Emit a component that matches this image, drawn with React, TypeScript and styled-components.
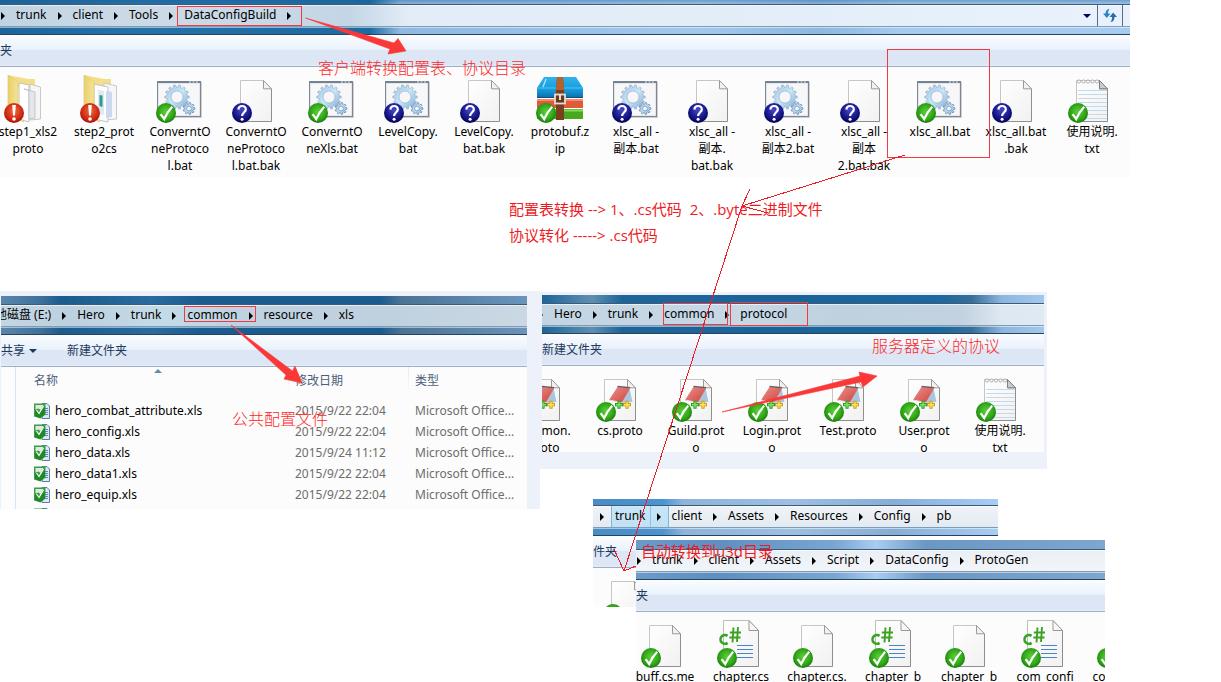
import React from "react";
import styled, { createGlobalStyle } from "styled-components";

const GlobalStyle = createGlobalStyle`
  * { box-sizing: border-box; }
  body {
    margin: 0;
    background: #fff;
    color: #000;
    font: 12px/17px "Noto Sans", "Noto Sans CJK SC", sans-serif;
  }
  button {
    margin: 0;
    padding: 0;
    border: 0;
    background: none;
    color: inherit;
    font: inherit;
    white-space: nowrap;
  }
`;

const Board = styled.main`
  position: relative;
  height: 100vh;
  min-height: 682px;
  overflow: hidden;
`;

/* Captured windows are pinned freely on the board. */
const Pin = styled.div<{ $x: number; $y: number; $w: number; $h?: number }>`
  position: absolute;
  left: ${(p) => p.$x}px;
  top: ${(p) => p.$y}px;
  width: ${(p) => p.$w}px;
  ${(p) => (p.$h ? `height: ${p.$h}px;` : "bottom: 0;")}
  overflow: hidden;
`;

const Backing = styled(Pin)`
  background: #edf2fa;
`;

const Window = styled.section`
  display: flex;
  flex-direction: column;
  height: 100%;
`;

const Glass = styled.header<{ $top: number; $glass: string }>`
  flex: none;
  display: flex;
  padding: ${(p) => p.$top}px 0 7px;
  border-bottom: 1px solid #27445f;
  background: ${(p) => p.$glass};
`;

const Address = styled.nav<{ $tint: string; $shift: number }>`
  flex: 1;
  display: flex;
  align-items: center;
  height: 23px;
  padding-left: ${(p) => Math.max(p.$shift, 0)}px;
  border-top: 1px solid #3c5b78;
  border-bottom: 1px solid #7e9cb6;
  box-shadow: inset 0 1px rgba(255, 255, 255, 0.6), 0 1px rgba(255, 255, 255, 0.5);
  background: ${(p) => p.$tint};
  overflow: hidden;

  & > :first-child {
    margin-left: ${(p) => Math.min(p.$shift, 0)}px;
  }
`;

const Crumb = styled.button<{ $hot?: boolean }>`
  height: 21px;
  padding: 0 4px 2px 3px;
  ${(p) => p.$hot && "background: rgba(150, 212, 248, 0.45); box-shadow: -1px 0 #7fb6dc, 1px 0 #7fb6dc;"}
`;

const Chevron = styled.span<{ $hot?: boolean }>`
  display: flex;
  align-items: center;
  justify-content: center;
  flex: none;
  width: 18px;
  height: 21px;
  margin-right: 1px;
  ${(p) => p.$hot && "background: rgba(150, 212, 248, 0.45); box-shadow: 1px 0 #7fb6dc;"}
`;

const AddressTools = styled.div`
  display: flex;
  align-items: center;
  margin-left: auto;
`;

const AddressButton = styled.button<{ $w: number; $line?: boolean }>`
  display: flex;
  align-items: center;
  justify-content: center;
  width: ${(p) => p.$w}px;
  height: 21px;
  ${(p) => p.$line && "border-left: 1px solid #4f6f8e; border-right: 1px solid #4f6f8e;"}
`;

const Toolbar = styled.div`
  flex: none;
  display: flex;
  align-items: center;
  height: 32px;
  border-bottom: 1px solid #a0afc8;
  background: linear-gradient(#fbfdff 0, #e8f1fb 15px, #dce6f4 15px, #dce6f4 29px, #e6eef9 31px);
  color: #1e395b;
`;

const ToolButton = styled.button<{ $gap?: number }>`
  display: flex;
  align-items: center;
  gap: 4px;
  margin-right: ${(p) => p.$gap ?? 0}px;
`;

const Files = styled.ul<{ $shift: number }>`
  flex: 1;
  display: flex;
  margin: 0;
  padding: 8px 0 0;
  list-style: none;
  background: #fcfcfc;

  & > :first-child {
    margin-left: ${(p) => p.$shift}px;
  }
`;

const File = styled.li`
  flex: none;
  display: flex;
  flex-direction: column;
  align-items: center;
  width: 76px;
  text-align: center;
  white-space: pre;
`;

const Details = styled.div`
  flex: 1;
  display: flex;
  background: #fcfcfc;
`;

const NavEdge = styled.div`
  flex: none;
  width: 15px;
  border-right: 1px solid #d6e5f5;
`;

const Table = styled.table`
  flex: 1;
  align-self: flex-start;
  border-collapse: collapse;
  table-layout: fixed;
`;

const Th = styled.th<{ $w?: number; $first?: boolean }>`
  position: relative;
  width: ${(p) => (p.$w ? `${p.$w}px` : "auto")};
  height: 33px;
  padding: 0 0 7px ${(p) => (p.$first ? 18 : 7)}px;
  color: #4c607a;
  font-weight: 400;
  text-align: left;
  background: ${(p) =>
    p.$first ? "none" : "linear-gradient(#dfeaf7, #fcfcfc) 0 0 / 1px 25px no-repeat"};
`;

const SortMark = styled.svg`
  position: absolute;
  left: 138px;
  top: 2px;
`;

const Td = styled.td`
  height: 21px;
  padding: 0 0 0 7px;
  color: #6d6d6d;
  white-space: nowrap;
`;

const NameCell = styled(Td)`
  padding-left: 18px;
  color: #000;
`;

const NameBox = styled.div`
  display: flex;
  align-items: center;
  gap: 5px;
`;

const Note = styled.p<{ $x: number; $y: number; $big?: boolean }>`
  position: absolute;
  left: ${(p) => p.$x}px;
  top: ${(p) => p.$y}px;
  margin: 0;
  color: ${(p) => (p.$big ? "#ff2626" : "#ed1c24")};
  font-family: "Open Sans", "Noto Sans CJK SC", sans-serif;
  font-size: ${(p) => (p.$big ? 16 : 15)}px;
  line-height: 26px;
  font-weight: ${(p) => (p.$big ? 300 : 400)};
  white-space: pre;
`;

const Marks = styled.svg`
  position: absolute;
  left: 0;
  top: 0;
  pointer-events: none;
`;

type BadgeKind = "ok" | "ask" | "warn";

const Defs = () => (
  <svg width="0" height="0" style={{ position: "absolute" }} aria-hidden="true">
    <defs>
      <radialGradient id="g-ok" cx=".5" cy=".45" r=".55">
        <stop offset="0" stopColor="#5fd03c" />
        <stop offset=".7" stopColor="#2fa516" />
        <stop offset="1" stopColor="#1a7a0c" />
      </radialGradient>
      <radialGradient id="g-ask" cx=".5" cy=".35" r=".6">
        <stop offset="0" stopColor="#4a4ac8" />
        <stop offset=".6" stopColor="#1c1c94" />
        <stop offset="1" stopColor="#06065a" />
      </radialGradient>
      <radialGradient id="g-warn" cx=".5" cy=".4" r=".6">
        <stop offset="0" stopColor="#f0683c" />
        <stop offset=".7" stopColor="#cf2a12" />
        <stop offset="1" stopColor="#a01208" />
      </radialGradient>
      <linearGradient id="g-page" x1="0" y1="0" x2="1" y2="1">
        <stop offset="0" stopColor="#fff" />
        <stop offset="1" stopColor="#f1f1f1" />
      </linearGradient>
      <linearGradient id="g-gear" x1="0" y1="0" x2="1" y2="1">
        <stop offset="0" stopColor="#a5c4e0" />
        <stop offset=".5" stopColor="#c6e6f8" />
        <stop offset="1" stopColor="#7fa9d2" />
      </linearGradient>
      <linearGradient id="g-fold" x1="0" y1="0" x2="1" y2="0">
        <stop offset="0" stopColor="#e9cf6c" />
        <stop offset="1" stopColor="#fbf0b4" />
      </linearGradient>
      <linearGradient id="g-book" x1="0" y1="0" x2="1" y2="1">
        <stop offset="0" stopColor="#ee8f88" />
        <stop offset="1" stopColor="#cc4440" />
      </linearGradient>
      <linearGradient id="g-blue" x1="0" y1="0" x2="0" y2="1">
        <stop offset="0" stopColor="#2eb4ee" />
        <stop offset=".6" stopColor="#179bdc" />
        <stop offset="1" stopColor="#0a6ea8" />
      </linearGradient>
    </defs>
  </svg>
);

const Badge = ({ kind }: { kind: BadgeKind }) => (
  <g>
    <circle cx="10" cy="38" r="10" fill={`url(#g-${kind})`} />
    {kind === "ok" && (
      <path d="M4.6 39.2 L8.2 44 C10.2 39.6 12.6 35.6 16.2 31.8" fill="none" stroke="#fff" strokeWidth="2.2" />
    )}
    {kind === "ask" && (
      <>
        <path d="M6.4 34.6 C6.6 29.6 14.2 30 13.8 34.6 C13.6 37.2 10.2 37.4 10.1 41" fill="none" stroke="#fff" strokeWidth="2.2" />
        <circle cx="10.1" cy="44.2" r="1.5" fill="#fff" />
      </>
    )}
    {kind === "warn" && (
      <>
        <path d="M8.2 30 H11.8 L11 40.6 H9 Z" fill="#fff" />
        <circle cx="10" cy="44" r="1.8" fill="#fff" />
      </>
    )}
  </g>
);

const Sheet = ({ tall }: { tall?: boolean }) =>
  tall ? (
    <g>
      <path d="M6.5 .5 H32 L41.5 10.5 V46.5 H6.5 Z" fill="url(#g-page)" stroke="#bdbdbd" />
      <path d="M41.5 10.5 V46.5 H7" fill="none" stroke="#8d8d8d" />
      <path d="M32 .5 V10.5 H41.5 Z" fill="#f6f6f6" stroke="#9a9a9a" />
    </g>
  ) : (
    <g>
      <path d="M8.5 5.5 H31.5 L39.5 14 V46.5 H8.5 Z" fill="url(#g-page)" stroke="#c6c6c6" />
      <path d="M39.5 14 V46.5 H9" fill="none" stroke="#8f8f8f" />
      <path d="M31.5 5.5 V13.8 H39.5 Z" fill="#f2f2f2" stroke="#9a9a9a" />
    </g>
  );

const gearPath = (cx: number, cy: number, r: number, n: number, tooth: number) => {
  const pts: string[] = [];
  for (let i = 0; i < n; i++) {
    const a = (i / n) * Math.PI * 2;
    const s = (Math.PI * 2) / n;
    [
      [a - s * 0.3, r],
      [a - s * 0.18, r + tooth],
      [a + s * 0.18, r + tooth],
      [a + s * 0.3, r],
    ].forEach(([t, q]) => pts.push(`${(cx + Math.cos(t) * q).toFixed(2)} ${(cy + Math.sin(t) * q).toFixed(2)}`));
  }
  return `M${pts.join("L")}Z`;
};

const hole = (cx: number, cy: number, r: number) =>
  `M${cx - r} ${cy}a${r} ${r} 0 1 0 ${2 * r} 0a${r} ${r} 0 1 0 ${-2 * r} 0Z`;

const Art: Record<string, React.ReactNode> = {
  page: <Sheet />,
  bat: (
    <g>
      <rect x="2.5" y="7.5" width="43" height="35" fill="none" stroke="#cfcfcf" />
      <rect x="1.5" y="6.5" width="43" height="35" fill="#f7f7f9" stroke="#7d8794" />
      <rect x="1" y="6" width="44" height="2" fill="#76828f" />
      <path d="M33 7h2M36.5 7h2M40 7h2" stroke="#d9e6f4" strokeWidth="1" />
      <rect x="2.5" y="8.5" width="41" height="32" fill="none" stroke="#e3e6ea" />
      <path
        fillRule="evenodd"
        d={gearPath(21, 22, 10, 14, 2.2) + hole(21, 22, 6)}
        fill="url(#g-gear)"
        stroke="#8fa9c4"
        strokeWidth=".6"
      />
      <path
        fillRule="evenodd"
        d={gearPath(33, 33.5, 4.4, 9, 1.6) + hole(33, 33.5, 2.4)}
        fill="url(#g-gear)"
        stroke="#5f88b2"
        strokeWidth=".7"
      />
    </g>
  ),
  txt: (
    <g>
      <Sheet />
      <path d="M10 15.5H39M10 19.5H39M10 23.5H39M10 27.5H39M10 31.5H39M10 35.5H39M10 39.5H39M10 43.5H39" stroke="#c3d9ec" />
      <path d="M31.5 5.5V13.8H39.5Z" fill="#c9ccd0" stroke="#7e7e7e" />
      {[11, 15.5, 20, 24.5, 29].map((x) => (
        <circle key={x} cx={x} cy="6.5" r="1.6" fill="#fff" stroke="#9c9c9c" strokeWidth=".8" />
      ))}
    </g>
  ),
  proto: (
    <g>
      <Sheet />
      <path d="M33.5 14 L36.5 28 L26 29 Z" fill="#a9c6de" />
      <path d="M21.500 13 L34 14.5 L26 28.5 L13 26 Z" fill="url(#g-book)" />
      <path d="M21.500 12.5 L34 13.8" stroke="#6e5a5a" strokeWidth="1.4" />
      <path d="M13 26 L26 28.5" stroke="#e8d8d8" strokeWidth="1" />
      <path d="M23 26.7v8M19 30.7h8" stroke="#2c9a2c" strokeWidth="3.2" />
      <path d="M23 27.700v6M20 30.7h6" stroke="#7be468" strokeWidth="1.4" />
      <path d="M31 26.7v8M27 30.7h8" stroke="#d09c18" strokeWidth="3.2" />
      <path d="M31 27.700v6M28 30.7h6" stroke="#ffe45c" strokeWidth="1.4" />
    </g>
  ),
  cs: (
    <g>
      <Sheet tall />
      <path d="M20 25.5H36M20 29.5H36M20 33.5H36M20 37.5H36" stroke="#4a86c4" shapeRendering="crispEdges" />
      <path d="M10.600 15.900a4.400 4.400 0 1 0 0 7" fill="none" stroke="#3aa322" strokeWidth="2.6" />
      <path d="M16.500 7.500L15.500 22.500M21 7L20 22M12.800 12.500H24M12.300 17.500H23.500" stroke="#3aa322" strokeWidth="1.9" />
    </g>
  ),
  zip: (
    <g>
      <path d="M8 2 H40 L47 13 V23 H1 V13 Z" fill="url(#g-blue)" />
      <path d="M1 13 H47" stroke="#4cc4f4" />
      <path d="M1 22.5 H47" stroke="#07527e" />
      <rect x="1" y="24" width="46" height="9" fill="#e0593a" />
      <path d="M1 25H47" stroke="#f58c6c" strokeWidth="2" />
      <rect x="1" y="34" width="46" height="10" fill="#48a820" />
      <path d="M1 35.5H47" stroke="#8ad85a" strokeWidth="2" />
      <path d="M10 4 L7 12" stroke="#bfe9fb" strokeWidth="1.2" />
      <path d="M21 2 H27 L28 16 V45 H20 V16 Z" fill="#7a3f1e" />
      <path d="M21 2 H27 L28 15 H20 Z" fill="#b5632b" />
      <rect x="19" y="19.5" width="10" height="9" fill="#6a3a20" stroke="#e5dcd2" strokeWidth="1.8" />
      <path d="M24 20v5" stroke="#f4efe8" strokeWidth="1.8" />
    </g>
  ),
  folder: (
    <g>
      <path d="M4 0 L24 4 L31 4 V14 L14 12 Z" fill="#f3de8a" />
      <path d="M26 9 L36.5 12 V44 L26 45 Z" fill="#f5f5f5" stroke="#c9c9c9" />
      <path d="M15 8 L25 10 V47 L15 44 Z" fill="#fff" stroke="#c4c4c4" />
      <path d="M20 14 L31 17 V43 L25 44 V15 Z" fill="#e4e7ea" stroke="#b8bcc0" strokeWidth=".8" />
      <path d="M4 0 L14 7 V42 L20 47 L4 40 Z" fill="url(#g-fold)" stroke="#e0c868" strokeWidth=".7" />
    </g>
  ),
  folder2: (
    <g>
      <path d="M4 0 L24 4 L31 4 V14 L14 12 Z" fill="#f3de8a" />
      <path d="M24 8 L36.5 11 V44 L24 45 Z" fill="#f5f7fa" stroke="#c9c9c9" />
      <path d="M14 9 L28 12 V47 L14 44 Z" fill="#fdfdfd" stroke="#c4c4c4" />
      <path d="M18 15 L24 16 V40 L18 39 Z" fill="#dfe9f2" />
      <path d="M19.5 20 L22.5 20.5 V32 L19.5 31 Z" fill="#2f9a8c" />
      <path d="M26 16 L32 17 V42 L26 43 Z" fill="#ccd8ee" />
      <path d="M4 0 L14 7 V42 L20 47 L4 40 Z" fill="url(#g-fold)" stroke="#e0c868" strokeWidth=".7" />
    </g>
  ),
};

const FileIcon = ({ art, badge }: { art: string; badge: BadgeKind }) => (
  <svg width="48" height="48" viewBox="0 0 48 48" aria-hidden="true">
    {Art[art]}
    <Badge kind={badge} />
  </svg>
);

const SheetIcon = () => (
  <svg width="16" height="16" viewBox="0 0 16 16" aria-hidden="true">
    <path d="M8 .5h5l2.500 2.500v12.500H8z" fill="#dce8f6" stroke="#5a7ea8" />
    <path d="M10 5.500h4M10 7.500h4M10 9.500h4M10 11.500h4" stroke="#5f88bd" />
    <path d="M0 .5h11.500v11l-5 4-6.500-2z" fill="#3f9a4a" />
    <path d="M1.500 2h8l-3 5-2-1.500-3 1z" fill="#d9efd9" />
    <path d="M1 7l4 3 6-6v7.500l-5 3.500-5-2z" fill="#1f8a22" />
    <path d="M2.500 7L5 10.500 9.500 3" fill="none" stroke="#fff" strokeWidth="1.2" />
  </svg>
);

const Arrow = ({ hot }: { hot?: boolean }) => (
  <Chevron $hot={hot}>
    <svg width="4" height="8" viewBox="0 0 4 8" aria-hidden="true">
      <path d="M0 0L4 4L0 8Z" fill="#000" />
    </svg>
  </Chevron>
);

const Down = ({ color }: { color: string }) => (
  <svg width="8" height="4" viewBox="0 0 8 4" aria-hidden="true">
    <path d="M0 0H8L4 4Z" fill={color} />
  </svg>
);

interface TopProps {
  top: number;
  glass: string;
  tint: string;
  shift: number;
  lead?: boolean;
  trail?: boolean;
  hot?: number;
  crumbs: string[];
  children?: React.ReactNode;
}

const Top = ({ top, glass, tint, shift, lead, trail, hot, crumbs, children }: TopProps) => (
  <Glass $top={top} $glass={glass}>
    <Address $tint={tint} $shift={shift} aria-label="Location">
      {lead && <Arrow />}
      {crumbs.map((c, i) => (
        <React.Fragment key={c}>
          <Crumb type="button" $hot={hot === i}>
            {c}
          </Crumb>
          {(trail || i < crumbs.length - 1) && <Arrow hot={hot === i} />}
        </React.Fragment>
      ))}
      {children}
    </Address>
  </Glass>
);

type Entry = [art: string, badge: BadgeKind, label: string];

const FileStrip = ({ shift, items }: { shift: number; items: Entry[] }) => (
  <Files $shift={shift}>
    {items.map(([art, badge, label], i) => (
      <File key={i}>
        <FileIcon art={art} badge={badge} />
        {label}
      </File>
    ))}
  </Files>
);

const toolFiles: Entry[] = [
  ["folder", "warn", "step1_xls2\nproto"],
  ["folder2", "warn", "step2_prot\no2cs"],
  ["bat", "ok", "ConverntO\nneProtoco\nl.bat"],
  ["page", "ask", "ConverntO\nneProtoco\nl.bat.bak"],
  ["bat", "ok", "ConverntO\nneXls.bat"],
  ["bat", "ask", "LevelCopy.\nbat"],
  ["page", "ask", "LevelCopy.\nbat.bak"],
  ["zip", "ok", "protobuf.z\nip"],
  ["bat", "ask", "xlsc_all -\n副本.bat"],
  ["page", "ask", "xlsc_all -\n副本.\nbat.bak"],
  ["bat", "ask", "xlsc_all -\n副本2.bat"],
  ["page", "ask", "xlsc_all -\n副本\n2.bat.bak"],
  ["bat", "ok", "xlsc_all.bat"],
  ["page", "ask", "xlsc_all.bat\n.bak"],
  ["txt", "ok", "使用说明.\ntxt"],
];

const protoFiles: Entry[] = [
  ["proto", "ok", "common.\nproto"],
  ["proto", "ok", "cs.proto"],
  ["proto", "ok", "Guild.prot\no"],
  ["proto", "ok", "Login.prot\no"],
  ["proto", "ok", "Test.proto"],
  ["proto", "ok", "User.prot\no"],
  ["txt", "ok", "使用说明.\ntxt"],
];

const genFiles: Entry[] = [
  ["page", "ok", "buff.cs.me"],
  ["cs", "ok", "chapter.cs"],
  ["page", "ok", "chapter.cs."],
  ["cs", "ok", "chapter_b"],
  ["page", "ok", "chapter_b"],
  ["cs", "ok", "com_confi"],
  ["page", "ok", "com_confi"],
];

const sheets = [
  ["hero_combat_attribute.xls", "2015/9/22 22:04"],
  ["hero_config.xls", "2015/9/22 22:04"],
  ["hero_data.xls", "2015/9/24 11:12"],
  ["hero_data1.xls", "2015/9/22 22:04"],
  ["hero_equip.xls", "2015/9/22 22:04"],
  ["", ""],
];

const App = () => (
  <Board>
    <GlobalStyle />
    <Defs />

    <Pin $x={0} $y={0} $w={1130} $h={177}>
      <Window>
        <Top
          top={4}
          glass="linear-gradient(#1c5c9066, #1c5c9000 5px), linear-gradient(90deg, #1c659c 0, #2572ab 140px, #1d6aa3 370px, #8fb9e2 400px, #a3c8ee 700px, #8db8e0 820px, #a6caf0 900px, #a6caf0 100%)"
          tint="linear-gradient(90deg, #c1d4e4 0, #cbdae6 150px, #c4d6e6 350px, #d3e1ee 380px, #e3edf8 410px, #e2edf8 700px, #e9f2fc 100%)"
          shift={-6}
          lead
          trail
          crumbs={["trunk", "client", "Tools", "DataConfigBuild"]}
        >
          <AddressTools>
            <AddressButton type="button" $w={20} aria-label="Previous locations">
              <Down color="#000060" />
            </AddressButton>
            <AddressButton type="button" $w={26} $line aria-label="Refresh">
              <svg width="14" height="13" viewBox="0 0 14 13" aria-hidden="true">
                <path d="M6.500 0C4 0 2.500 2 2.500 4.500H0L3.800 9L7.500 4.500H5C5 2.500 5.500 1.500 6.500 0Z" fill="#2b86c4" />
                <path d="M7.500 13C10 13 11.500 11 11.500 8H14L10.200 3.500L6.500 8H9C9 10.500 8.500 11.500 7.500 13Z" fill="#2a6cb0" />
              </svg>
            </AddressButton>
            <AddressButton as="span" $w={7} />
          </AddressTools>
        </Top>
        <Toolbar>
          <ToolButton type="button">夹</ToolButton>
        </Toolbar>
        <FileStrip shift={-10} items={toolFiles} />
      </Window>
    </Pin>

    <Backing $x={0} $y={291} $w={540} $h={218} />
    <Pin $x={1} $y={296} $w={526} $h={213}>
      <Window>
        <Top
          top={8}
          glass="linear-gradient(90deg, #5b86ac 0, #3d719c 40px, #1b5b8e 60px, #2a6c9f 150px, #1a5c90 200px, #1a5c90 380px, #4b7396 400px, #6a94bb 100%)"
          tint="linear-gradient(90deg, #c4d6e3 0, #bdd0df 70px, #c3dbe8 160px, #c0d2e0 230px, #bfd1df 390px, #cbd8e4 100%)"
          shift={-9}
          crumbs={["地磁盘 (E:)", "Hero", "trunk", "common", "resource", "xls"]}
        />
        <Toolbar>
          <ToolButton type="button" $gap={30}>
            共享 <Down color="#1e395b" />
          </ToolButton>
          <ToolButton type="button">新建文件夹</ToolButton>
        </Toolbar>
        <Details>
          <NavEdge />
          <Table>
            <thead>
              <tr>
                <Th $w={272} $first>
                  名称
                  <SortMark width="8" height="4" viewBox="0 0 8 4" aria-hidden="true">
                    <path d="M0 4L4 0L8 4Z" fill="#5f8fb0" />
                  </SortMark>
                </Th>
                <Th $w={120}>修改日期</Th>
                <Th>类型</Th>
              </tr>
            </thead>
            <tbody>
              {sheets.map(([name, date], i) => (
                <tr key={i}>
                  <NameCell>
                    <NameBox>
                      <SheetIcon />
                      {name}
                    </NameBox>
                  </NameCell>
                  <Td>{date}</Td>
                  <Td>{name && "Microsoft Office..."}</Td>
                </tr>
              ))}
            </tbody>
          </Table>
        </Details>
      </Window>
    </Pin>

    <Backing $x={540} $y={292} $w={507} $h={177} />
    <Pin $x={542} $y={295} $w={502} $h={157}>
      <Window>
        <Top
          top={8}
          glass="linear-gradient(90deg, #1d6599 0, #5f8fb0 50px, #1d6599 80px, #1b649a 250px, #1d689e 400px, #376e9a 430px, #8db6de 460px, #a3c8ee 100%)"
          tint="linear-gradient(90deg, #c3d5e3 0, #c6d7e5 200px, #bfd1df 300px, #c2d2e0 420px, #dde8f3 460px, #dfe9f4 100%)"
          shift={-10}
          lead
          crumbs={["Hero", "trunk", "common", "protocol"]}
        />
        <Toolbar>
          <ToolButton type="button">新建文件夹</ToolButton>
        </Toolbar>
        <FileStrip shift={-36} items={protoFiles} />
      </Window>
    </Pin>

    <Pin $x={593} $y={499} $w={405} $h={37}>
      <Top
        top={6}
        glass="linear-gradient(90deg, #4b8cc4 0, #4a94d0 70px, #8db4da 90px, #9dbfe2 200px, #86aed4 300px, #a8cdf4 100%)"
        tint="linear-gradient(#f0f4f8, #e3eaf1)"
        shift={0}
        lead
        hot={0}
        crumbs={["trunk", "client", "Assets", "Resources", "Config", "pb"]}
      />
    </Pin>
    <Pin $x={593} $y={536} $w={43} $h={71}>
      <Window>
        <Toolbar>
          <ToolButton type="button">件夹</ToolButton>
        </Toolbar>
        <FileStrip shift={-4} items={[["page", "ok", ""]]} />
      </Window>
    </Pin>

    <Pin $x={636} $y={540} $w={469}>
      <Window>
        <Top
          top={9}
          glass="linear-gradient(90deg, #6a9bc9 0, #5d8fc0 80px, #7aa6d2 200px, #a9cdf0 240px, #6b97c4 290px, #7ea7cf 100%)"
          tint="linear-gradient(#e9eff5, #f3f5f8)"
          shift={-6}
          lead
          crumbs={["trunk", "client", "Assets", "Script", "DataConfig", "ProtoGen"]}
        />
        <Toolbar>
          <ToolButton type="button">夹</ToolButton>
        </Toolbar>
        <FileStrip shift={-9} items={genFiles} />
      </Window>
    </Pin>

    <Note $x={318} $y={55} $big>客户端转换配置表、协议目录</Note>
    <Note $x={232} $y={406} $big>公共配置文件</Note>
    <Note $x={872} $y={333} $big>服务器定义的协议</Note>
    <Note $x={509} $y={196}>{"配置表转换 --> 1、.cs代码  2、.byte二进制文件\n协议转化 -----> .cs代码"}</Note>
    <Note $x={641} $y={538}>自动转换到u3d目录</Note>

    <Marks width="1221" height="682" viewBox="0 0 1221 682" aria-hidden="true">
      <g fill="none" stroke="#f03a3e" shapeRendering="crispEdges">
        <rect x="177.5" y="6.5" width="124" height="19" />
        <rect x="887.5" y="49.5" width="102" height="108" />
        <rect x="184.5" y="306.5" width="71" height="15" />
        <rect x="663.5" y="303.5" width="64" height="21" />
        <rect x="730.5" y="302.5" width="77" height="23" />
      </g>
      <g fill="#fb3838" stroke="#fb3838" strokeWidth=".6" strokeLinejoin="round">
        <path d="M305.5 18L394 43L398 38.5L406 51L388 54L390 49Z" />
        <path d="M231 325L292.5 371L295 366L302 383L284 379L286 375Z" />
        <path d="M722 412L860 376L859 372L877 376L863 387L861 382Z" />
      </g>
      <g fill="none" stroke="#ed1c24" shapeRendering="crispEdges">
        <path d="M905 155L742 206M750 189L742 206L768 213" />
        <path d="M742 206L624 571M614 549L624 571L636 566" />
      </g>
    </Marks>
  </Board>
);

export default App;
